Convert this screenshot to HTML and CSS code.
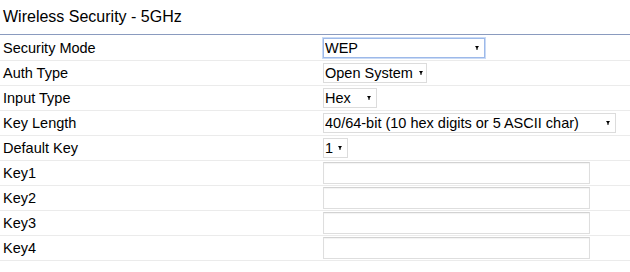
FILE: index.html
```html
<!DOCTYPE html>
<html lang="en">
    <head>
        <meta charset="UTF-8">
        <meta name="viewport" content="width=device-width, initial-scale=1.0">
        <title>Wireless Security - 5GHz</title>
        <link rel="stylesheet" href="styles.css">
    </head>
    <body>
        <h1 class="title">Wireless Security - 5GHz</h1>

        <form class="settings">
            <div class="row first">
                <label>Security Mode</label>
                <select class="sel-mode focused">
                    <option>WEP</option>
                    <option>WPA2-PSK</option>
                    <option>Disabled</option>
                </select>
            </div>
            <div class="row">
                <label>Auth Type</label>
                <select class="sel-auth">
                    <option>Open System</option>
                    <option>Shared Key</option>
                </select>
            </div>
            <div class="row">
                <label>Input Type</label>
                <select class="sel-input">
                    <option>Hex</option>
                    <option>ASCII</option>
                </select>
            </div>
            <div class="row">
                <label>Key Length</label>
                <select class="sel-length">
                    <option>40/64-bit (10 hex digits or 5 ASCII char)</option>
                    <option>104/128-bit (26 hex digits or 13 ASCII char)</option>
                </select>
            </div>
            <div class="row">
                <label>Default Key</label>
                <select class="sel-key">
                    <option>1</option>
                    <option>2</option>
                    <option>3</option>
                    <option>4</option>
                </select>
            </div>
            <div class="row">
                <label>Key1</label>
                <input type="text" class="key-input">
            </div>
            <div class="row">
                <label>Key2</label>
                <input type="text" class="key-input">
            </div>
            <div class="row">
                <label>Key3</label>
                <input type="text" class="key-input">
            </div>
            <div class="row">
                <label>Key4</label>
                <input type="text" class="key-input">
            </div>
        </form>
    </body>
</html>
```

FILE: styles.css
```css
body {
    font-family: Arial, "Liberation Sans", sans-serif;
    background-color: #fff;
    color: #000;
    margin: 0;
    padding: 0;
}

.title {
    font-size: 16px;
    font-weight: normal;
    margin: 0;
    height: 34px;
    line-height: 34px;
    padding-left: 3px;
    border-bottom: 1px solid #8a9bbf;
}

.settings {
    margin: 0;
}

.row {
    display: grid;
    grid-template-columns: 323px 1fr;
    align-items: center;
    height: 24px;
    border-bottom: 1px solid #ebebeb;
}

.row.first {
    height: 25px;
}

.row label {
    font-size: 14.5px;
    padding-left: 3px;
}

select {
    appearance: none;
    -webkit-appearance: none;
    font-family: Arial, "Liberation Sans", sans-serif;
    font-size: 14.5px;
    color: #000;
    height: 20px;
    padding: 0 4px 0 1px;
    border: 1px solid #dcdcdc;
    border-radius: 0;
    background-color: #fff;
    background-image: url("data:image/svg+xml,%3Csvg xmlns='http://www.w3.org/2000/svg' width='4' height='4'%3E%3Cpolygon points='0,0 4,0 2,3' fill='%23000'/%3E%3Crect x='1.5' y='2' width='1' height='2' fill='%23000'/%3E%3C/svg%3E");
    background-repeat: no-repeat;
    background-position: right 5px center;
    outline: none;
}

.focused {
    border-color: #9db9e9;
    box-shadow: 0 0 0 1px #c9daf5;
}

.sel-mode {
    width: 162px;
}

.sel-auth {
    width: 104px;
    background-position: right 3px center;
}

.sel-input {
    width: 54px;
}

.sel-length {
    width: 293px;
}

.sel-key {
    width: 25px;
    padding-right: 0;
    background-position: right 5px center;
}

.key-input {
    width: 267px;
    height: 22px;
    box-sizing: border-box;
    border: 1px solid #dedede;
    border-top-color: #d2d2d2;
    box-shadow: inset 0 1px 1px rgba(0, 0, 0, 0.05);
    padding: 0 3px;
    font-size: 14px;
}
```
